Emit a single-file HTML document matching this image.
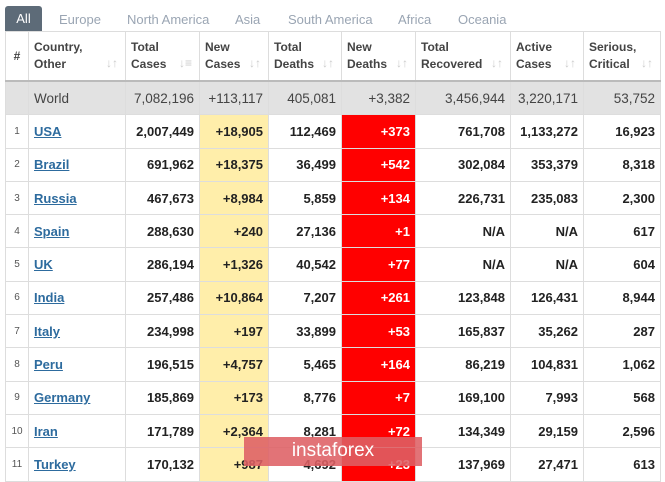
<!DOCTYPE html>
<html><head><style>
body{margin:0;width:665px;height:468px;overflow:hidden;background:#fff;font-family:"Liberation Sans",Arial,sans-serif;position:relative}
.tabs{position:absolute;top:6px;left:5px;height:25px;font-size:13px;color:#9aa5b3}
.tabs span{position:absolute;top:6px;white-space:nowrap}
.all{position:absolute;left:0;top:0;width:37px;height:25px;background:#5d6b78;color:#fff;border-radius:3px 3px 0 0;text-align:center;line-height:25px}
table{position:absolute;top:31px;left:5px;border-collapse:collapse;table-layout:fixed;font-size:13px;color:#222}
td,th{border:1px solid #ddd;padding:0 5px;white-space:nowrap;overflow:hidden}
th{height:48px;text-align:left;font-size:12px;color:#444;font-weight:bold;line-height:17px;vertical-align:middle;position:relative;border-bottom:2px solid #bbb}
th i{position:absolute;right:7px;bottom:8px;color:#ccc;font-style:normal;font-size:12px}
td{height:32.3px;text-align:right;font-weight:bold}
td:first-child{text-align:center;font-weight:normal;font-size:10px;color:#555}
td:nth-child(2){text-align:left}
td a{color:#2d6b9e;text-decoration:underline}
tr.w td{background:#e2e2e2;font-weight:normal;color:#444;font-size:13.5px}
td.y{background:#ffeeaa}
td.r{background:#ff0000;color:#fff}
.wm{position:absolute;left:244px;top:437px;width:178px;height:29px;background:rgba(222,96,100,0.88);color:#fff;font-size:19px;text-align:center;line-height:28px}
</style></head><body>
<div class="tabs"><div class="all">All</div>
<span style="left:54px">Europe</span><span style="left:122px">North America</span><span style="left:230px">Asia</span><span style="left:283px">South America</span><span style="left:393px">Africa</span><span style="left:453px">Oceania</span></div>
<table>
<colgroup><col style="width:23px"><col style="width:97px"><col style="width:74px"><col style="width:69px"><col style="width:73px"><col style="width:74px"><col style="width:95px"><col style="width:73px"><col style="width:77px"></colgroup>
<tr><th style="text-align:center">#</th><th>Country,<br>Other<i>↓↑</i></th><th>Total<br>Cases<i>↓≡</i></th><th>New<br>Cases<i>↓↑</i></th><th>Total<br>Deaths<i>↓↑</i></th><th>New<br>Deaths<i>↓↑</i></th><th>Total<br>Recovered<i>↓↑</i></th><th>Active<br>Cases<i>↓↑</i></th><th>Serious,<br>Critical<i>↓↑</i></th></tr>
<tr class="w"><td></td><td>World</td><td>7,082,196</td><td>+113,117</td><td>405,081</td><td>+3,382</td><td>3,456,944</td><td>3,220,171</td><td>53,752</td></tr>
<tr><td>1</td><td><a>USA</a></td><td>2,007,449</td><td class="y">+18,905</td><td>112,469</td><td class="r">+373</td><td>761,708</td><td>1,133,272</td><td>16,923</td></tr>
<tr><td>2</td><td><a>Brazil</a></td><td>691,962</td><td class="y">+18,375</td><td>36,499</td><td class="r">+542</td><td>302,084</td><td>353,379</td><td>8,318</td></tr>
<tr><td>3</td><td><a>Russia</a></td><td>467,673</td><td class="y">+8,984</td><td>5,859</td><td class="r">+134</td><td>226,731</td><td>235,083</td><td>2,300</td></tr>
<tr><td>4</td><td><a>Spain</a></td><td>288,630</td><td class="y">+240</td><td>27,136</td><td class="r">+1</td><td>N/A</td><td>N/A</td><td>617</td></tr>
<tr><td>5</td><td><a>UK</a></td><td>286,194</td><td class="y">+1,326</td><td>40,542</td><td class="r">+77</td><td>N/A</td><td>N/A</td><td>604</td></tr>
<tr><td>6</td><td><a>India</a></td><td>257,486</td><td class="y">+10,864</td><td>7,207</td><td class="r">+261</td><td>123,848</td><td>126,431</td><td>8,944</td></tr>
<tr><td>7</td><td><a>Italy</a></td><td>234,998</td><td class="y">+197</td><td>33,899</td><td class="r">+53</td><td>165,837</td><td>35,262</td><td>287</td></tr>
<tr><td>8</td><td><a>Peru</a></td><td>196,515</td><td class="y">+4,757</td><td>5,465</td><td class="r">+164</td><td>86,219</td><td>104,831</td><td>1,062</td></tr>
<tr><td>9</td><td><a>Germany</a></td><td>185,869</td><td class="y">+173</td><td>8,776</td><td class="r">+7</td><td>169,100</td><td>7,993</td><td>568</td></tr>
<tr><td>10</td><td><a>Iran</a></td><td>171,789</td><td class="y">+2,364</td><td>8,281</td><td class="r">+72</td><td>134,349</td><td>29,159</td><td>2,596</td></tr>
<tr><td>11</td><td><a>Turkey</a></td><td>170,132</td><td class="y">+987</td><td>4,692</td><td class="r">+23</td><td>137,969</td><td>27,471</td><td>613</td></tr>
</table>
<div class="wm">instaforex</div>
</body></html>
